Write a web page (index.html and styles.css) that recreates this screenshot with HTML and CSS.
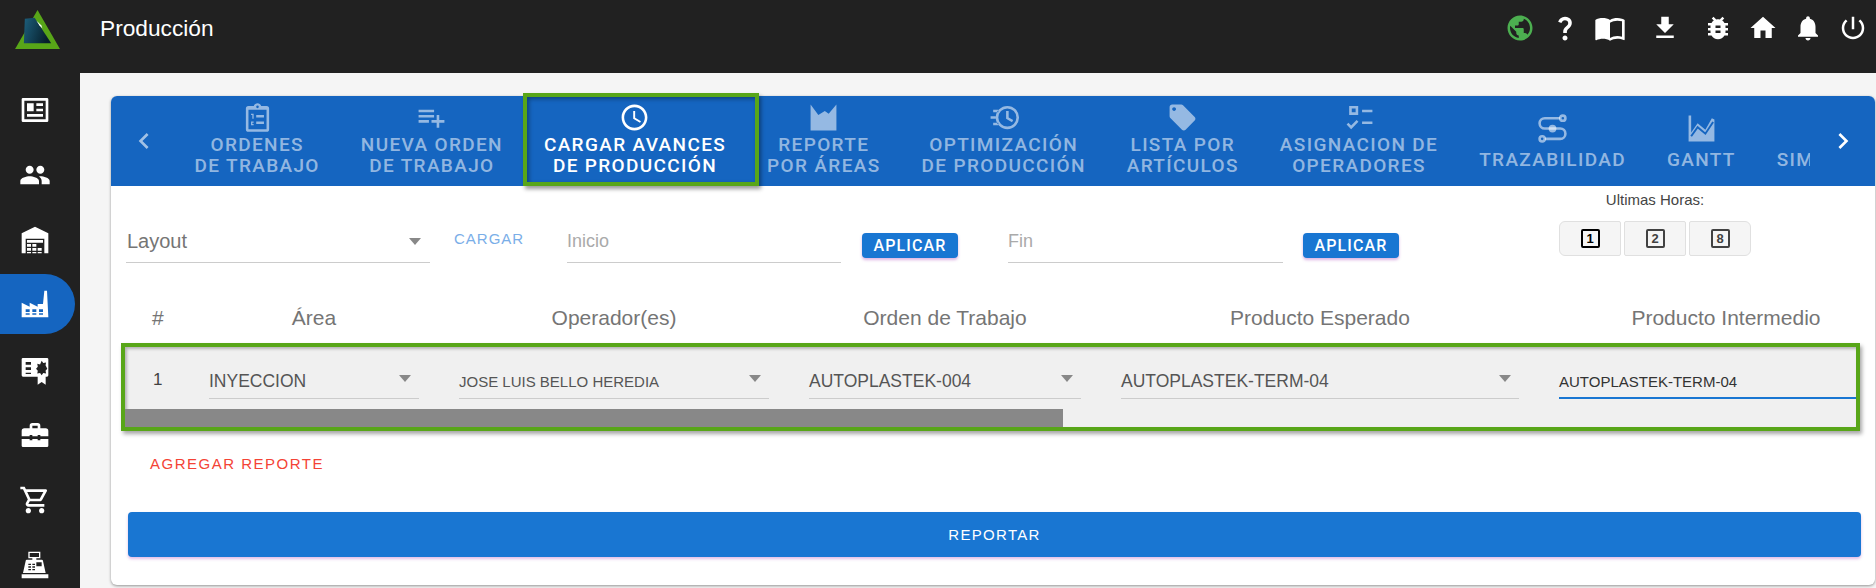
FILE: index.html
```html
<!DOCTYPE html>
<html lang="es">
<head>
<meta charset="UTF-8" />
<meta name="viewport" content="width=device-width, initial-scale=1" />
<title>Producción</title>
<link rel="stylesheet" href="styles.css">
</head>
<body>

<header class="topbar">
  <svg class="logo" viewBox="0 0 48 42">
    <defs>
      <linearGradient id="logoFill" x1="0" y1="0" x2="1" y2="0.3">
        <stop offset="0" stop-color="#1d5f7c" />
        <stop offset="1" stop-color="#07202c" />
      </linearGradient>
    </defs>
    <path fill="#58a618" d="M23 0 46 40H0z" />
    <path fill="url(#logoFill)" d="M10 9 20 8 37 34H9z" />
    <path fill="#fff" d="M22 11l5 5 1 3-3-3z" />
  </svg>
  <h1 class="page-title">Producción</h1>
  <nav class="top-icons">
    <svg class="globe" viewBox="0 0 24 24"><path d="M12 2C6.48 2 2 6.48 2 12s4.48 10 10 10 10-4.48 10-10S17.52 2 12 2zm-1 17.93c-3.95-.49-7-3.85-7-7.93 0-.62.08-1.21.21-1.79L9 15v1c0 1.1.9 2 2 2v1.93zm6.9-2.54c-.26-.81-1-1.39-1.9-1.39h-1v-3c0-.55-.45-1-1-1H8v-2h2c.55 0 1-.45 1-1V7h2c1.1 0 2-.9 2-2v-.41c2.93 1.19 5 4.06 5 7.41 0 2.08-.8 3.97-2.1 5.39z"/></svg>
    <svg viewBox="0 0 24 24"><path d="M11.07 12.85c.77-1.39 2.25-2.21 3.11-3.44.91-1.29.4-3.7-2.18-3.7-1.69 0-2.52 1.28-2.87 2.34L6.54 6.96C7.25 4.83 9.18 3 11.99 3c2.35 0 3.96 1.07 4.78 2.41.7 1.15 1.11 3.3.03 4.9-1.2 1.77-2.35 2.31-2.97 3.45-.25.46-.35.76-.35 2.24h-2.89c-.01-.78-.13-2.05.48-3.15zM14 20c0 1.1-.9 2-2 2s-2-.9-2-2 .9-2 2-2 2 .9 2 2z"/></svg>
    <svg class="book" viewBox="0 0 24 24"><path d="M21 5c-1.11-.35-2.33-.5-3.5-.5-1.95 0-4.05.4-5.5 1.5-1.45-1.1-3.55-1.5-5.5-1.5S2.45 4.9 1 6v14.65c0 .25.25.5.5.5.1 0 .15-.05.25-.05C3.1 20.45 5.05 20 6.5 20c1.95 0 4.05.4 5.5 1.5 1.35-.85 3.8-1.5 5.5-1.5 1.65 0 3.35.3 4.75 1.05.1.05.15.05.25.05.25 0 .5-.25.5-.5V6c-.6-.45-1.25-.75-2-1zm0 13.5c-1.1-.35-2.3-.5-3.5-.5-1.7 0-4.15.65-5.5 1.5V8c1.35-.85 3.8-1.5 5.5-1.5 1.2 0 2.4.15 3.5.5v11.5z"/></svg>
    <svg class="wide" viewBox="0 0 24 24"><path d="M19 9h-4V3H9v6H5l7 7 7-7zM5 18v2h14v-2H5z"/></svg>
    <svg class="wide-sm" viewBox="0 0 24 24"><path d="M20 8h-2.81c-.45-.78-1.07-1.45-1.82-1.96L17 4.41 15.59 3l-2.17 2.17C12.96 5.06 12.49 5 12 5c-.49 0-.96.06-1.41.17L8.41 3 7 4.41l1.62 1.63C7.88 6.55 7.26 7.22 6.81 8H4v2h2.09c-.05.33-.09.66-.09 1v1H4v2h2v1c0 .34.04.67.09 1H4v2h2.81c1.04 1.79 2.97 3 5.19 3s4.15-1.21 5.19-3H20v-2h-2.09c.05-.33.09-.66.09-1v-1h2v-2h-2v-1c0-.34-.04-.67-.09-1H20V8zm-6 8h-4v-2h4v2zm0-4h-4v-2h4v2z"/></svg>
    <svg viewBox="0 0 24 24"><path d="M10 20v-6h4v6h5v-8h3L12 3 2 12h3v8z"/></svg>
    <svg viewBox="0 0 24 24"><path d="M12 22c1.1 0 2-.9 2-2h-4c0 1.1.89 2 2 2zm6-6v-5c0-3.07-1.64-5.64-4.5-6.32V4c0-.83-.67-1.5-1.5-1.5s-1.5.67-1.5 1.5v.68C7.63 5.36 6 7.92 6 11v5l-2 2v1h16v-1l-2-2z"/></svg>
    <svg viewBox="0 0 24 24"><path d="M13 3h-2v10h2V3zm4.83 2.17l-1.42 1.42C17.99 7.86 19 9.81 19 12c0 3.87-3.13 7-7 7s-7-3.13-7-7c0-2.19 1.01-4.14 2.58-5.42L6.17 5.17C4.23 6.82 3 9.26 3 12c0 4.97 4.03 9 9 9s9-4.03 9-9c0-2.74-1.23-5.18-3.17-6.83z"/></svg>
  </nav>
</header>

<div class="layout">
  <aside class="sidebar">
    <div class="side-item">
      <svg viewBox="0 0 24 24"><path fill-rule="evenodd" d="M3 3h18a1 1 0 0 1 1 1v16a1 1 0 0 1-1 1H3a1 1 0 0 1-1-1V4a1 1 0 0 1 1-1zm1 2v14h16V5zm2 2h5v6H6zm7 0h5v2h-5zm0 4h5v2h-5zM6 15h12v2H6z"/></svg>
    </div>
    <div class="side-item">
      <svg viewBox="0 0 24 24"><path d="M16 11c1.66 0 2.99-1.34 2.99-3S17.66 5 16 5c-1.66 0-3 1.34-3 3s1.34 3 3 3zm-8 0c1.66 0 2.99-1.34 2.99-3S9.66 5 8 5C6.34 5 5 6.34 5 8s1.34 3 3 3zm0 2c-2.33 0-7 1.17-7 3.5V19h14v-2.5c0-2.33-4.67-3.5-7-3.5zm8 0c-.29 0-.62.02-.97.05 1.16.84 1.97 1.97 1.97 3.45V19h6v-2.5c0-2.33-4.67-3.5-7-3.5z"/></svg>
    </div>
    <div class="side-item">
      <svg viewBox="0 0 24 24"><path fill-rule="evenodd" d="M12 2l10 5v15h-3V11H5v11H2V7zM6 12h12v2H6zm0 3h3v2H6zm4 0h3v2h-3zm-4 3h3v2H6zm4 0h3v2h-3zm-4 3h3v1H6zm4 0h3v1h-3zm4-3h3v2h-3zm0 3h3v1h-3z"/></svg>
    </div>
    <div class="side-item active">
      <svg viewBox="0 0 24 24"><path fill-rule="evenodd" d="M2 22V11l6 3v-3l6 3V12h4l1-10h2l1 20zm3-6v2h3v-2zm5 0v2h3v-2zm5 0v2h3v-2zM5 19v1h3v-1zm5 0v1h3v-1zm5 0v1h3v-1z"/></svg>
    </div>
    <div class="side-item">
      <svg viewBox="0 0 24 24"><path fill-rule="evenodd" d="M3 3h18a1 1 0 0 1 1 1v12a1 1 0 0 1-1 1h-1v6l-3-2-3 2v-6H3a1 1 0 0 1-1-1V4a1 1 0 0 1 1-1zm2 3v2h4V6zm0 4v2h4v-2zm0 4v1h4v-1zm12-9l1.2 1.8 2.1-.4-.4 2.1L21.2 11l-1.3 1.5.4 2.1-2.1-.4L17 16l-1.2-1.8-2.1.4.4-2.1L12.8 11l1.3-1.5-.4-2.1 2.1.4z"/></svg>
    </div>
    <div class="side-item">
      <svg viewBox="0 0 24 24"><path fill-rule="evenodd" d="M8 7V5a2 2 0 0 1 2-2h4a2 2 0 0 1 2 2v2h4a2 2 0 0 1 2 2v4h-6v-1h-2v1H10v-1H8v1H2V9a2 2 0 0 1 2-2zm2 0h4V5h-4zM2 15h6v1h2v-1h4v1h2v-1h6v5a1 1 0 0 1-1 1H3a1 1 0 0 1-1-1z"/></svg>
    </div>
    <div class="side-item">
      <svg viewBox="0 0 24 24"><path d="M15.55 13c.75 0 1.41-.41 1.75-1.03l3.58-6.49c.37-.66-.11-1.48-.87-1.48H5.21l-.94-2H1v2h2l3.6 7.59-1.35 2.44C4.52 15.37 5.48 17 7 17h12v-2H7l1.1-2h7.45zM6.16 6h12.15l-2.76 5H8.53L6.16 6zM7 18c-1.1 0-1.99.9-1.99 2S5.9 22 7 22s2-.9 2-2-.9-2-2-2zm10 0c-1.1 0-1.99.9-1.99 2s.89 2 1.99 2 2-.9 2-2-.9-2-2-2z"/></svg>
    </div>
    <div class="side-item">
      <svg viewBox="0 0 24 24"><path fill-rule="evenodd" d="M7 2h9v5h-3v1h4a1 1 0 0 1 1 1l2 9H3l2-9a1 1 0 0 1 1-1h4V7H7zm1 1v3h7V3zm-1 8v1h2v-1zm3 0v1h2v-1zm3-1v3h4v-3zM7 13v1h2v-1zm3 0v1h2v-1zm-3 2v1h2v-1zm3 0v1h2v-1zM2 19h20v3H2z"/></svg>
    </div>
  </aside>

  <main class="content">
    <section class="card">
      <div class="tabbar">
        <div class="tab-arrow left">
          <svg viewBox="0 0 24 24"><path d="M15.41 7.41L14 6l-6 6 6 6 1.41-1.41L10.83 12z"/></svg>
        </div>
        <div class="tabs">
          <div class="tab">
            <svg viewBox="0 0 24 24"><path fill-rule="evenodd" d="M19 3h-4.18C14.4 1.84 13.3 1 12 1s-2.4.84-2.82 2H5a2 2 0 0 0-2 2v16a2 2 0 0 0 2 2h14a2 2 0 0 0 2-2V5a2 2 0 0 0-2-2zm-7-.25a1 1 0 1 1 0 2 1 1 0 0 1 0-2zM5 6h14v15H5zm6 4v2h6v-2zm0 5v2h6v-2zM7 9h2v4H8V10H7zm0 6h2v1H8v1h1v1H7z"/></svg>
            <span>ORDENES<br>DE TRABAJO</span>
          </div>
          <div class="tab">
            <svg viewBox="0 0 24 24"><path d="M14 10H2v2h12v-2zm0-4H2v2h12V6zm4 8v-4h-2v4h-4v2h4v4h2v-4h4v-2h-4zM2 16h8v-2H2v2z"/></svg>
            <span>NUEVA ORDEN<br>DE TRABAJO</span>
          </div>
          <div class="tab current">
            <svg viewBox="0 0 24 24"><path d="M11.99 2C6.47 2 2 6.48 2 12s4.47 10 9.99 10C17.52 22 22 17.52 22 12S17.52 2 11.99 2zM12 20c-4.42 0-8-3.58-8-8s3.58-8 8-8 8 3.58 8 8-3.58 8-8 8zm.5-13H11v6l5.25 3.15.75-1.23-4.5-2.67z"/></svg>
            <span>CARGAR AVANCES<br>DE PRODUCCIÓN</span>
          </div>
          <div class="tab">
            <svg viewBox="0 0 24 24"><path d="M2 22V2l6 8 5-3 3 2 6-7v20z"/></svg>
            <span>REPORTE<br>POR ÁREAS</span>
          </div>
          <div class="tab">
            <svg viewBox="0 0 24 24"><path fill-rule="evenodd" d="M15 3a9 9 0 1 1 0 18 9 9 0 0 1 0-18zm0 2a7 7 0 1 0 0 14 7 7 0 0 0 0-14zm-1 2h2v5l3.5 2-.9 1.6L14 13zM4 6h4v2H4zM2 11h4v2H2zm2 5h4v2H4z"/></svg>
            <span>OPTIMIZACIÓN<br>DE PRODUCCIÓN</span>
          </div>
          <div class="tab">
            <svg viewBox="0 0 24 24"><path d="M21.41 11.58l-9-9C12.05 2.22 11.55 2 11 2H4c-1.1 0-2 .9-2 2v7c0 .55.22 1.05.59 1.42l9 9c.36.36.86.58 1.41.58.55 0 1.05-.22 1.41-.59l7-7c.37-.36.59-.86.59-1.41 0-.55-.23-1.06-.59-1.42zM5.5 7C4.67 7 4 6.33 4 5.5S4.67 4 5.5 4 7 4.67 7 5.5 6.33 7 5.5 7z"/></svg>
            <span>LISTA POR<br>ARTÍCULOS</span>
          </div>
          <div class="tab">
            <svg viewBox="0 0 24 24"><path fill-rule="evenodd" d="M4 3h7v7H4zm2 2v3h3V5zm8 1h8v2h-8zm0 9h8v2h-8zM5.54 21L2 17.46l1.41-1.41 2.12 2.12 4.24-4.24 1.41 1.41z"/></svg>
            <span>ASIGNACION DE<br>OPERADORES</span>
          </div>
          <div class="tab single">
            <svg viewBox="0 0 24 24"><g fill="none" stroke="currentColor" stroke-width="2"><path d="M18 4H6a4 4 0 0 0 0 8h12a4 4 0 0 1 0 8H6"/><circle cx="20" cy="4" r="2" fill="#1565c0"/><circle cx="4" cy="20" r="2" fill="#1565c0"/></g><circle cx="12" cy="12" r="3" fill="currentColor"/></svg>
            <span>TRAZABILIDAD</span>
          </div>
          <div class="tab single">
            <svg viewBox="0 0 24 24"><path d="M2 22V2h2v13l5-7 6 5 5-9 2 1v17z"/><path d="M4 18l5-7 6 5 6-9" fill="none" stroke="#1565c0" stroke-width="1.5"/></svg>
            <span>GANTT</span>
          </div>
          <div class="tab single">
            <svg viewBox="0 0 24 24"></svg>
            <span>SIMULACIÓN</span>
          </div>
        </div>
        <div class="tab-arrow right">
          <svg viewBox="0 0 24 24"><path d="M10 6L8.59 7.41 13.17 12l-4.58 4.59L10 18l6-6z"/></svg>
        </div>
      </div>
      <div class="tab-mark"></div>

      <div class="filters">
        <div class="field layout-field"><span>Layout</span><i class="caret"></i></div>
        <span class="load-btn">CARGAR</span>
        <div class="field date-field"><span>Inicio</span></div>
        <button class="apply-btn">APLICAR</button>
        <div class="field date-field end"><span>Fin</span></div>
        <button class="apply-btn">APLICAR</button>
        <div class="hours">
          <div class="hours-label">Ultimas Horas:</div>
          <div class="hours-group">
            <div class="hour-btn on"><b>1</b></div>
            <div class="hour-btn"><b>2</b></div>
            <div class="hour-btn"><b>8</b></div>
          </div>
        </div>
      </div>

      <div class="table-head">
        <div class="num">#</div>
        <div>Área</div>
        <div>Operador(es)</div>
        <div>Orden de Trabajo</div>
        <div>Producto Esperado</div>
        <div>Producto Intermedio</div>
      </div>

      <div class="report-row">
        <div class="row-scroll">
          <div class="num">1</div>
          <div class="cell"><span>INYECCION</span><i class="caret"></i></div>
          <div class="cell small"><span>JOSE LUIS BELLO HEREDIA</span><i class="caret"></i></div>
          <div class="cell"><span>AUTOPLASTEK-004</span><i class="caret"></i></div>
          <div class="cell"><span>AUTOPLASTEK-TERM-04</span><i class="caret"></i></div>
          <div class="cell focused"><span>AUTOPLASTEK-TERM-04</span></div>
        </div>
        <div class="scroll-track"><div class="scroll-thumb"></div></div>
      </div>

      <div class="add-report">AGREGAR REPORTE</div>
      <button class="submit-btn">REPORTAR</button>
    </section>
  </main>
</div>

</body>
</html>
```

FILE: styles.css
```css
* {
  box-sizing: border-box;
}
body {
  margin: 0;
  height: 588px;
  overflow: hidden;
  font-family: 'Liberation Sans', Arial, sans-serif;
  background: #212121;
}
svg {
  fill: currentColor;
  display: block;
}

/* top bar */
.topbar {
  display: flex;
  align-items: flex-start;
  height: 73px;
  background: #212121;
  color: white;
}
.logo {
  width: 47px;
  height: 41px;
  margin: 10px 0 0 15px;
}
.page-title {
  margin: 13px 0 0 38px;
  font-size: 22.7px;
  line-height: 30px;
  font-weight: 400;
}
.top-icons {
  display: flex;
  gap: 15px;
  margin: 13px 8px 0 auto;
}
.top-icons svg {
  width: 30px;
  height: 30px;
}
.top-icons .book {
  width: 32px;
  height: 32px;
  margin: -1px -1px 0;
}
.top-icons .globe {
  color: #4caf50;
}
.top-icons .wide {
  margin-left: 10px;
}
.top-icons .wide-sm {
  margin-left: 8px;
}

/* sidebar */
.layout {
  display: flex;
  height: 515px;
}
.sidebar {
  width: 80px;
  flex-shrink: 0;
  padding-top: 4px;
  color: white;
  background: #212121;
}
.side-item {
  display: flex;
  align-items: center;
  width: 75px;
  height: 65px;
  padding-left: 19px;
}
.side-item svg {
  width: 32px;
  height: 32px;
}
.side-item.active {
  height: 60px;
  margin: 2px 0 3px;
  background: #1565c0;
  border-radius: 0 30px 30px 0;
}

/* card */
.content {
  flex: 1;
  min-width: 0;
  padding: 23px 1px 0 31px;
  background: #f5f5f5;
}
.card {
  position: relative;
  height: 489px;
  background: white;
  border-radius: 6px;
  box-shadow: 0 1px 3px rgba(0, 0, 0, .4);
}
.tabbar {
  display: flex;
  height: 90px;
  background: #1565c0;
  border-radius: 6px 6px 0 0;
  color: white;
}
.tab-arrow {
  display: flex;
  align-items: center;
  justify-content: center;
}
.tab-arrow svg {
  width: 32px;
  height: 32px;
}
.tab-arrow.left {
  width: 63px;
  padding-left: 2px;
  opacity: .6;
}
.tab-arrow.right {
  width: 65px;
}
.tabs {
  flex: 1;
  min-width: 0;
  display: flex;
  overflow: hidden;
}
.tab {
  flex-shrink: 0;
  display: flex;
  flex-direction: column;
  align-items: center;
  justify-content: center;
  padding: 0 20.5px 2px;
  font-family: Roboto, sans-serif;
  font-size: 19px;
  font-weight: 500;
  line-height: 21px;
  letter-spacing: 1.35px;
  text-align: center;
  color: rgba(255, 255, 255, .55);
}
.tab svg {
  width: 31px;
  height: 31px;
  margin: -3px 0 1px;
  flex-shrink: 0;
}
.tab.single {
  padding-top: 3px;
  padding-bottom: 0;
}
.tab.single span {
  margin-top: 4px;
}
.tab.current {
  color: white;
}
/* green highlight drawn over the active tab */
.tab-mark {
  position: absolute;
  left: 412px;
  top: -3px;
  width: 236px;
  height: 93px;
  border: 4px solid #58a618;
  box-shadow: 2px 3px 4px rgba(0, 0, 0, .4), inset 2px 2px 4px rgba(0, 0, 0, .35);
}

/* filters */
.filters {
  position: relative;
  display: flex;
  align-items: flex-end;
  height: 77px;
}
.field {
  display: flex;
  align-items: center;
  height: 38px;
  border-bottom: 1px solid #ccc;
  color: #757575;
}
.layout-field {
  width: 304px;
  margin-left: 15px;
  padding: 0 9px 4px 1px;
  font-size: 20px;
  justify-content: space-between;
}
.date-field {
  width: 274px;
  margin-left: 43px;
  font-size: 18px;
  color: #aaa;
  align-items: flex-start;
  padding-top: 6px;
}
.date-field.end {
  width: 275px;
  margin-left: 50px;
}
.caret {
  width: 0;
  height: 0;
  border-left: 6px solid transparent;
  border-right: 6px solid transparent;
  border-top: 7px solid #888;
}
.load-btn {
  width: 70px;
  margin: 0 0 16px 24px;
  font-size: 15px;
  line-height: 16px;
  letter-spacing: 1px;
  white-space: nowrap;
  color: #7aaee8;
}
.apply-btn {
  width: 96px;
  height: 25px;
  margin: 0 0 5px 21px;
  padding: 0;
  border: none;
  border-radius: 4px;
  background: #1976d2;
  color: white;
  font-family: Roboto, sans-serif;
  font-size: 16px;
  font-weight: 500;
  letter-spacing: 1.1px;
  box-shadow: 0 2px 3px rgba(156, 39, 176, .35);
}
.date-field.end + .apply-btn {
  margin-left: 20px;
}
.hours {
  align-self: flex-start;
  margin: 6px 0 0 160px;
  width: 192px;
}
.hours-label {
  font-size: 15px;
  line-height: 16px;
  text-align: center;
  color: #444;
}
.hours-group {
  display: flex;
  gap: 3px;
  margin-top: 13px;
}
.hour-btn {
  display: flex;
  align-items: center;
  justify-content: center;
  width: 62px;
  height: 35px;
  background: #f5f5f5;
  border: 1px solid #e0e0e0;
  border-radius: 2px;
  color: #424242;
}
.hour-btn b {
  display: block;
  width: 19px;
  height: 19px;
  border: 2px solid currentColor;
  border-radius: 2px;
  font-size: 13px;
  line-height: 15px;
  text-align: center;
}
.hour-btn.on {
  color: black;
}
.hour-btn:first-child {
  border-radius: 6px 2px 2px 6px;
}
.hour-btn:last-child {
  border-radius: 2px 6px 6px 2px;
}

/* table */
.table-head,
.row-scroll {
  display: grid;
  grid-template-columns: 44px 210px 310px 272px 398px 334px;
  column-gap: 40px;
}
.table-head {
  margin: 43px 19px 13px 14px;
  overflow: hidden;
  height: 24px;
  font-size: 21px;
  line-height: 24px;
  text-align: center;
  color: #757575;
}
.table-head .num {
  text-align: left;
  padding-left: 27px;
}
.report-row {
  height: 88px;
  margin: 0 15px 0 10px;
  border: 4px solid #58a618;
  background: #f0f0f0;
  box-shadow: 2px 3px 4px rgba(0, 0, 0, .35), inset 2px 2px 3px rgba(0, 0, 0, .25);
  overflow: hidden;
}
.row-scroll {
  height: 62px;
  padding-top: 18px;
}
.row-scroll .num {
  padding: 5px 0 0 28px;
  font-size: 17px;
  color: #424242;
}
.cell {
  display: flex;
  align-items: center;
  justify-content: space-between;
  height: 34px;
  padding-right: 8px;
  border-bottom: 1px solid #ccc;
  font-size: 17.5px;
  color: #555;
}
.cell .caret {
  margin-bottom: 6px;
}
.cell.small {
  font-size: 15px;
}
.cell.focused {
  font-size: 15px;
  color: #333;
  border-bottom: 2px solid #1976d2;
}
.scroll-track {
  height: 18px;
}
.scroll-thumb {
  width: 938px;
  height: 18px;
  background: #888;
}
.add-report {
  margin: 25px 0 0 39px;
  font-size: 15px;
  line-height: 16px;
  letter-spacing: 1.5px;
  color: #f44336;
}
.submit-btn {
  display: block;
  width: 1733px;
  height: 45px;
  margin: 40px 0 0 17px;
  border: none;
  border-radius: 4px;
  background: #1976d2;
  color: white;
  font-family: 'Liberation Sans', Arial, sans-serif;
  font-size: 15px;
  letter-spacing: 1.3px;
  box-shadow: 0 2px 3px rgba(156, 39, 176, .3);
}
```
